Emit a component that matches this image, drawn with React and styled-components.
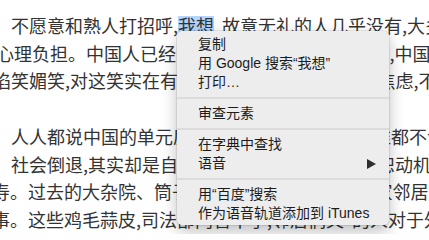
import React from "react";
import styled, { createGlobalStyle } from "styled-components";

const Global = createGlobalStyle`
  html, body { margin: 0; padding: 0; background: #fff; }
  body { overflow: hidden; }
`;

const Page = styled.div`
  position: relative;
  width: 429px;
  height: 234px;
  overflow: hidden;
  box-sizing: border-box;
  padding-top: 12px;
  background: #fff;
  font-family: "Noto Sans CJK SC", sans-serif;
  font-size: 18px;
  line-height: 27.7px;
  color: #333;
`;

const Paragraph = styled.div`
  margin-top: ${(p) => p.$gap || 0}px;
`;

const LeadLine = styled.div`
  white-space: nowrap;
  margin-left: ${(p) => p.$x}px;
`;

const Line = styled.div`
  display: flex;
  justify-content: space-between;
  white-space: nowrap;
  margin-left: ${(p) => p.$x}px;
  width: ${(p) => p.$w}px;
`;

const Seg = styled.span`
  flex: none;
`;

const Gap = styled.span`
  margin-left: ${(p) => p.$gap}px;
`;

const Selected = styled.span`
  display: inline-block;
  line-height: 18px;
  background: #b4d5fe;
`;

const Menu = styled.div`
  position: absolute;
  left: 177px;
  top: 31px;
  width: 212px;
  box-sizing: border-box;
  padding: 4px 0 2px;
  background: #ededed;
  border-radius: 5px;
  box-shadow: 0 0 0 0.5px rgba(0, 0, 0, 0.16), 0 6px 16px rgba(0, 0, 0, 0.26);
  font-family: "Liberation Sans", "Noto Sans CJK SC", sans-serif;
  font-size: 14px;
  color: #1c1c1c;
`;

const Item = styled.div`
  display: flex;
  align-items: center;
  justify-content: space-between;
  height: 19px;
  line-height: 19px;
  padding: 0 13px 0 21px;
  white-space: nowrap;
`;

const Separator = styled.div`
  height: 2px;
  margin: 5px 0;
  background: #dcdcdc;
`;

const Arrow = () => (
  <svg width="9" height="10" viewBox="0 0 9 10">
    <path d="M0 0 L9 5 L0 10 Z" fill="#2e2e2e" />
  </svg>
);

const lines1 = [
  { x: -4, w: 434.5, left: "心理负担。中国人已经习惯了用笑脸来掩饰", right: ",中国" },
  { x: -7, w: 461.5, left: "谄笑媚笑,对这笑实在有些莫名的", right: "焦虑,不安" },
];

const lines2 = [
  { x: 11, w: 452, left: "人人都说中国的单元房造成了邻里之间", right: "谁都不认识" },
  { x: 11, w: 420, left: "社会倒退,其实却是自我保护的", right: "恕动机" },
  { x: -8, w: 436.5, left: "寿。过去的大杂院、筒子楼里", right: "家邻居" },
  { x: -8, w: 450, left: "事。这些鸡毛蒜皮,司法部门管不了,邻居们又", right: "的人对于外" },
];

export default function App() {
  return (
    <Page>
      <Global />
      <Paragraph>
        <LeadLine $x={11}>
          不愿意和熟人打招呼,<Selected>我想</Selected>
          <Gap $gap={8}>故意无礼的人几乎没有,大多</Gap>
        </LeadLine>
        {lines1.map((l, i) => (
          <Line key={i} $x={l.x} $w={l.w}>
            <Seg>{l.left}</Seg>
            <Seg>{l.right}</Seg>
          </Line>
        ))}
      </Paragraph>
      <Paragraph $gap={27.7}>
        {lines2.map((l, i) => (
          <Line key={i} $x={l.x} $w={l.w}>
            <Seg>{l.left}</Seg>
            <Seg>{l.right}</Seg>
          </Line>
        ))}
      </Paragraph>
      <Menu>
        <Item>复制</Item>
        <Item>用 Google 搜索“我想”</Item>
        <Item>打印…</Item>
        <Separator />
        <Item>审查元素</Item>
        <Separator />
        <Item>在字典中查找</Item>
        <Item>
          语音
          <Arrow />
        </Item>
        <Separator />
        <Item>用“百度”搜索</Item>
        <Item>作为语音轨道添加到 iTunes</Item>
      </Menu>
    </Page>
  );
}
